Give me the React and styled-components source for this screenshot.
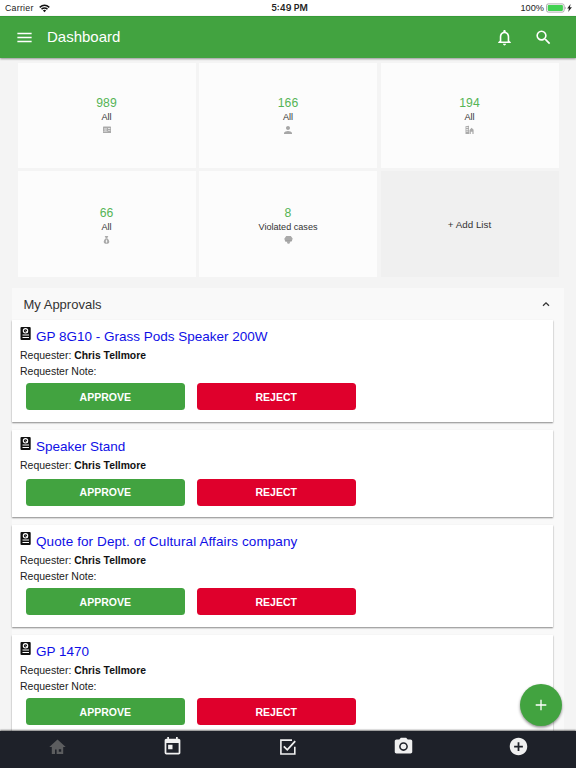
import React from "react";
import styled, { createGlobalStyle } from "styled-components";
import {
  MdMenu,
  MdNotificationsNone,
  MdSearch,
  MdPerson,
  MdPhotoCamera,
  MdAddCircle,
  MdToday,
} from "react-icons/md";

const GlobalStyle = createGlobalStyle`
  * { box-sizing: border-box; }
  body {
    margin: 0;
    font-family: "Liberation Sans", Arial, sans-serif;
    color: #222;
  }
  svg { display: block; }
`;

const Screen = styled.div`
  width: 576px;
  height: 768px;
  display: flex;
  flex-direction: column;
  overflow: hidden;
  position: relative;
  background: #f4f4f4;
`;

const StatusBar = styled.div`
  flex: none;
  height: 15.5px;
  padding: 1px 4px 0 5px;
  display: grid;
  grid-template-columns: 1fr auto 1fr;
  align-items: center;
  background: #fff;
  font-size: 9px;
  line-height: 14px;
`;

const StatusSide = styled.div`
  display: flex;
  align-items: center;
  gap: ${(p) => p.$gap};
  justify-content: ${(p) => (p.$end ? "flex-end" : "flex-start")};
`;

const Carrier = styled.span`
  font-size: 8.8px;
  letter-spacing: 0.25px;
`;

const Percent = styled.span`
  font-size: 9.2px;
`;

const Clock = styled.span`
  font-family: Inter, "Liberation Sans", sans-serif;
  font-weight: 600;
  font-size: 9px;
  padding-left: 2px;
`;

const Header = styled.header`
  flex: none;
  height: 42px;
  padding: 0 23px 0 14.5px;
  display: flex;
  align-items: center;
  background: #42a340;
  border-top: 1px solid #379b38;
  color: #fff;
  box-shadow: 0 1px 2px rgba(0, 0, 0, 0.4);
  z-index: 1;
`;

const Title = styled.h1`
  flex: 1;
  margin: 0 0 0 13.5px;
  font-size: 15px;
  font-weight: 400;
  line-height: 20px;
`;

const HeaderActions = styled.div`
  display: flex;
  gap: 20px;
`;

const Content = styled.main`
  flex: 1;
  min-height: 0;
  overflow: hidden;
  padding: 5.5px 12.5px 0 12px;
`;

const Tiles = styled.section`
  display: grid;
  grid-template-columns: repeat(3, 178px);
  grid-template-rows: 105px 105.5px;
  gap: 3px 3.5px;
  padding-left: 5.5px;
`;

const Tile = styled.div`
  display: flex;
  flex-direction: column;
  align-items: center;
  padding-top: ${(p) => (p.$lower ? "34.6px" : "33px")};
  background: #fcfcfc;
`;

const Count = styled.span`
  font-size: 12.2px;
  line-height: 15px;
  color: #55b455;
`;

const TileLabel = styled.span`
  font-size: 9.1px;
  line-height: 12px;
  margin-bottom: 2px;
  color: #333;
`;

const AddTile = styled(Tile)`
  padding: 2px 0 0;
  justify-content: center;
  background: #f0f0f0;
  font-size: 9.8px;
  color: #333;
`;

const Panel = styled.section`
  margin-top: 11.5px;
  background: #f9f9f9;
`;

const PanelHeader = styled.div`
  height: 31.5px;
  padding: 1px 12.5px 0 11.5px;
  display: flex;
  align-items: center;
  justify-content: space-between;
  font-size: 13px;
  color: #333;
`;

const CardList = styled.div`
  display: flex;
  flex-direction: column;
  gap: 7.5px;
  padding-right: 11px;
`;

const Card = styled.article`
  height: ${(p) => (p.$tall ? "102.5px" : "87.5px")};
  flex: none;
  padding: 7.3px 8px 0;
  background: #fff;
  box-shadow: 0 1px 1.5px rgba(0, 0, 0, 0.45);
`;

const CardTitle = styled.div`
  display: flex;
  align-items: flex-start;
  gap: 5px;
  height: 20.2px;
  color: #0f0fe6;
  font-size: 13.5px;
  line-height: 19px;
  letter-spacing: ${(p) => (p.$loose ? "0.1px" : "0")};
`;

const Line = styled.div`
  font-size: 10.5px;
  line-height: ${(p) => (p.$note ? "14.8px" : "16px")};
  color: #222;
`;

const Strong = styled.b`
  font-size: 10.35px;
  color: #111;
`;

const Buttons = styled.div`
  display: flex;
  gap: 11.5px;
  margin: ${(p) => (p.$tall ? "4.7px" : "4.6px")} 0 0 5.5px;
`;

const Button = styled.button`
  width: 159.5px;
  height: 27px;
  padding: 0;
  border: 0;
  border-radius: 3.5px;
  background: ${(p) => (p.$danger ? "#df002c" : "#42a340")};
  color: #fff;
  font: 700 10.5px "Liberation Sans", Arial, sans-serif;
`;

const BottomNav = styled.nav`
  flex: none;
  height: 37.5px;
  padding-bottom: 5px;
  display: grid;
  grid-template-columns: repeat(5, 1fr);
  place-items: center;
  background: #1e2129;
  color: #f0f0f0;
  box-shadow: 0 -1px 1.5px rgba(0, 0, 0, 0.5);
  z-index: 1;
`;

const Fab = styled.button`
  position: absolute;
  right: 14px;
  bottom: 42.5px;
  width: 42px;
  height: 42px;
  padding: 0;
  border: 0;
  border-radius: 50%;
  display: grid;
  place-items: center;
  background: #42a340;
  box-shadow: 0 1.5px 3px rgba(0, 0, 0, 0.45);
  z-index: 2;
`;

const WifiIcon = () => (
  <svg width="11" height="9" viewBox="0 0 11 9" fill="none" stroke="#111" strokeWidth="1.5">
    <path d="M0.7 3.4Q5.5-0.8 10.3 3.4M2.5 5.2Q5.5 2.7 8.5 5.2" />
    <path d="M3.9 6.4Q5.5 5.2 7.1 6.4L5.5 8.2Z" fill="#111" stroke="none" />
  </svg>
);

const BatteryIcon = () => (
  <svg width="20" height="10" viewBox="0 0 20 10">
    <rect x="0.5" y="0.9" width="17.6" height="8.2" rx="1.8" fill="#fff" stroke="#999" strokeWidth="0.8" />
    <rect x="1.7" y="2.1" width="15.2" height="5.8" rx="0.8" fill="#42d152" />
    <path d="M18.7 3.5Q19.8 3.8 19.8 5T18.7 6.5Z" fill="#aaa" />
  </svg>
);

const BoltIcon = () => (
  <svg width="5" height="8" viewBox="0 0 5 8">
    <path d="M3.6 0 0.2 4.6H2L1.2 8 4.9 3.2H2.9Z" fill="#222" />
  </svg>
);

const ContactIcon = () => (
  <svg width="8" height="10" viewBox="0 0 8 10">
    <path
      fillRule="evenodd"
      fill="#aaa"
      d="M0 2Q0 1.5.6 1.5H7.4Q8 1.5 8 2V8H0ZM.8 6.9H4.2V6.2L2.8 5.3 3.4 4.4V3H1.6V4.4L2.2 5.3.8 6.2ZM5 3V4H5.7V3ZM6.3 3V4H7.2V3ZM5 5.2V6H5.7V5.2ZM6.3 5.2V6H7.2V5.2Z"
    />
    <path d="M1.6 3H3.4V4.4L2.8 5.3 4.2 6.2V6.9H.8V6.2L2.2 5.3 1.6 4.4Z" fill="#ccc" />
  </svg>
);

const BuildingIcon = () => (
  <svg width="9" height="10" viewBox="0 0 9 10">
    <path
      fillRule="evenodd"
      fill="#aaa"
      d="M.5 1.2 4 .8V9H.5ZM1.2 2.2V3H3.2V2.2ZM1.2 4V4.7H3.2V4ZM1.2 5.8V6.5H3.2V5.8ZM4.5 5 6.6 2.8 8.6 4.8V9H7.4V6.7H5.8V9H4.5Z"
    />
  </svg>
);

const MoneyBagIcon = () => (
  <svg width="7" height="10" viewBox="0 0 7 10">
    <path d="M1.7 1H5.3L4.3 3H2.7Z" fill="#aaa" />
    <path d="M2.7 3.3H4.3Q6.3 5.2 6.3 6.8T4.8 8.8H2.2Q.7 8.4.7 6.8T2.7 3.3Z" fill="#aaa" />
    <path d="M3.5 4.7V7.7M2.7 6.2H4.3" stroke="#fcfcfc" strokeWidth="0.8" />
  </svg>
);

const CaseIcon = () => (
  <svg width="9" height="10" viewBox="0 0 9 10">
    <path d="M2.2 1H6.8L8.7 3.5 7.7 6.6H6.5L5.3 8.7H3.7L2.7 6.8H1.3L.3 3.7Z" fill="#aaa" />
    <path d="M1.5 5.5H7.5" stroke="#999" strokeWidth="0.6" />
  </svg>
);

const PersonIcon = styled(MdPerson)`
  margin-top: -1px;
  color: #a6a6a6;
`;

const BadgeIcon = () => (
  <svg width="11" height="14" viewBox="0 0 11 14">
    <rect x="0.5" y="0" width="10.2" height="13" rx="1" fill="#111" />
    <circle cx="5.5" cy="3.8" r="2.2" fill="none" stroke="#fff" strokeWidth="1.1" />
    <path d="M5.4 3.6 7.8 6.1" fill="none" stroke="#fff" strokeWidth="0.9" />
    <path d="M2.5 8H9M2.5 10.5H9" stroke="#fff" strokeWidth="1.1" />
  </svg>
);

const ChevronUp = () => (
  <svg width="10" height="8" viewBox="0 0 10 8">
    <path d="M2 5.7 5 2.8 8 5.7" fill="none" stroke="#333" strokeWidth="1.3" />
  </svg>
);

const HomeIcon = () => (
  <svg width="17" height="16" viewBox="0 0 17 16">
    <path
      fillRule="evenodd"
      fill="#5c5d5f"
      d="M8.5.4 16.7 8.1H14.2V15H2.8V8.1H.3ZM6 15H7.6V10.6H6ZM9.8 10.2V12.7H12.2V10.2Z"
    />
  </svg>
);

const TaskIcon = () => (
  <svg width="18" height="18" viewBox="0 0 18 18" fill="none" stroke="#f0f0f0">
    <path d="M13 2.1H1.9V16H15.8V8.8" strokeWidth="1.6" />
    <path d="M4.8 8.3 8.3 11.8 16.2 3.2" strokeWidth="1.8" />
  </svg>
);

const PlusIcon = () => (
  <svg width="12" height="12" viewBox="0 0 12 12">
    <path d="M6 0.7V11.3M0.7 6H11.3" stroke="#fff" strokeWidth="1.3" />
  </svg>
);

const tiles = [
  { count: 989, label: "All", icon: <ContactIcon /> },
  { count: 166, label: "All", icon: <PersonIcon size={12} /> },
  { count: 194, label: "All", icon: <BuildingIcon /> },
  { count: 66, label: "All", icon: <MoneyBagIcon />, lower: true },
  { count: 8, label: "Violated cases", icon: <CaseIcon />, lower: true },
];

const approvals = [
  { title: "GP 8G10 - Grass Pods Speaker 200W", note: true },
  { title: "Speaker Stand", note: false },
  { title: "Quote for Dept. of Cultural Affairs company", note: true, loose: true },
  { title: "GP 1470", note: true },
];

const Approval = ({ title, note, loose }) => (
  <Card $tall={note}>
    <CardTitle $loose={loose}>
      <BadgeIcon />
      {title}
    </CardTitle>
    <Line>
      Requester: <Strong>Chris Tellmore</Strong>
    </Line>
    {note && <Line $note>Requester Note:</Line>}
    <Buttons $tall={note}>
      <Button>APPROVE</Button>
      <Button $danger>REJECT</Button>
    </Buttons>
  </Card>
);

export default function App() {
  return (
    <>
      <GlobalStyle />
      <Screen>
        <StatusBar>
          <StatusSide $gap="5px">
            <Carrier>Carrier</Carrier>
            <WifiIcon />
          </StatusSide>
          <Clock>5:49 PM</Clock>
          <StatusSide $end $gap="1.5px">
            <Percent>100%</Percent>
            <BatteryIcon />
            <BoltIcon />
          </StatusSide>
        </StatusBar>
        <Header>
          <MdMenu size={19} />
          <Title>Dashboard</Title>
          <HeaderActions>
            <MdNotificationsNone size={19} />
            <MdSearch size={19} />
          </HeaderActions>
        </Header>
        <Content>
          <Tiles>
            {tiles.map((t, i) => (
              <Tile key={i} $lower={t.lower}>
                <Count>{t.count}</Count>
                <TileLabel>{t.label}</TileLabel>
                {t.icon}
              </Tile>
            ))}
            <AddTile>+ Add List</AddTile>
          </Tiles>
          <Panel>
            <PanelHeader>
              My Approvals
              <ChevronUp />
            </PanelHeader>
            <CardList>
              {approvals.map((a) => (
                <Approval key={a.title} {...a} />
              ))}
            </CardList>
          </Panel>
        </Content>
        <Fab aria-label="Add">
          <PlusIcon />
        </Fab>
        <BottomNav>
          <HomeIcon />
          <MdToday size={21} />
          <TaskIcon />
          <MdPhotoCamera size={21} />
          <MdAddCircle size={21} />
        </BottomNav>
      </Screen>
    </>
  );
}
